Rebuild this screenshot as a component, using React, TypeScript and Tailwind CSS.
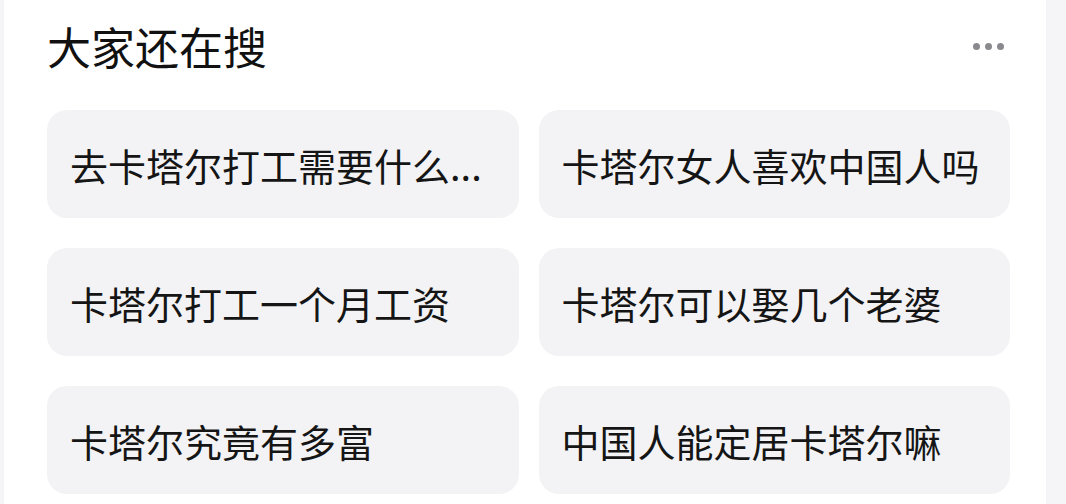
import React from 'react';

const searches = [
  '去卡塔尔打工需要什么...',
  '卡塔尔女人喜欢中国人吗',
  '卡塔尔打工一个月工资',
  '卡塔尔可以娶几个老婆',
  '卡塔尔究竟有多富',
  '中国人能定居卡塔尔嘛',
];

export default function App() {
  return (
    <div
      className="flex h-[504px] w-[1066px] overflow-hidden bg-[#f5f5f7]"
      style={{ fontFamily: '"Noto Sans CJK SC", "Noto Sans", sans-serif' }}
    >
      <div className="ml-[4px] w-[1042px] bg-white pl-[43px] pr-[32px] pt-[20px]">
        {/* Header */}
        <div className="flex h-[52px] items-center justify-between">
          <h2 className="text-[44px] leading-none font-normal text-[#111]">大家还在搜</h2>
          <div className="mr-[10px] flex gap-[5px]">
            <span className="h-[7px] w-[7px] rounded-full bg-[#8a8a8e]" />
            <span className="h-[7px] w-[7px] rounded-full bg-[#8a8a8e]" />
            <span className="h-[7px] w-[7px] rounded-full bg-[#8a8a8e]" />
          </div>
        </div>

        {/* Suggestions grid */}
        <div className="mt-[38px] grid w-[963px] grid-cols-2 gap-x-[20px] gap-y-[30px]">
          {searches.map((q) => (
            <div
              key={q}
              className="flex h-[108px] items-center rounded-[20px] bg-[#f3f3f5] px-[23px]"
            >
              <span className="whitespace-nowrap text-[38px] leading-normal text-[#151515]">{q}</span>
            </div>
          ))}
        </div>
      </div>
    </div>
  );
}
